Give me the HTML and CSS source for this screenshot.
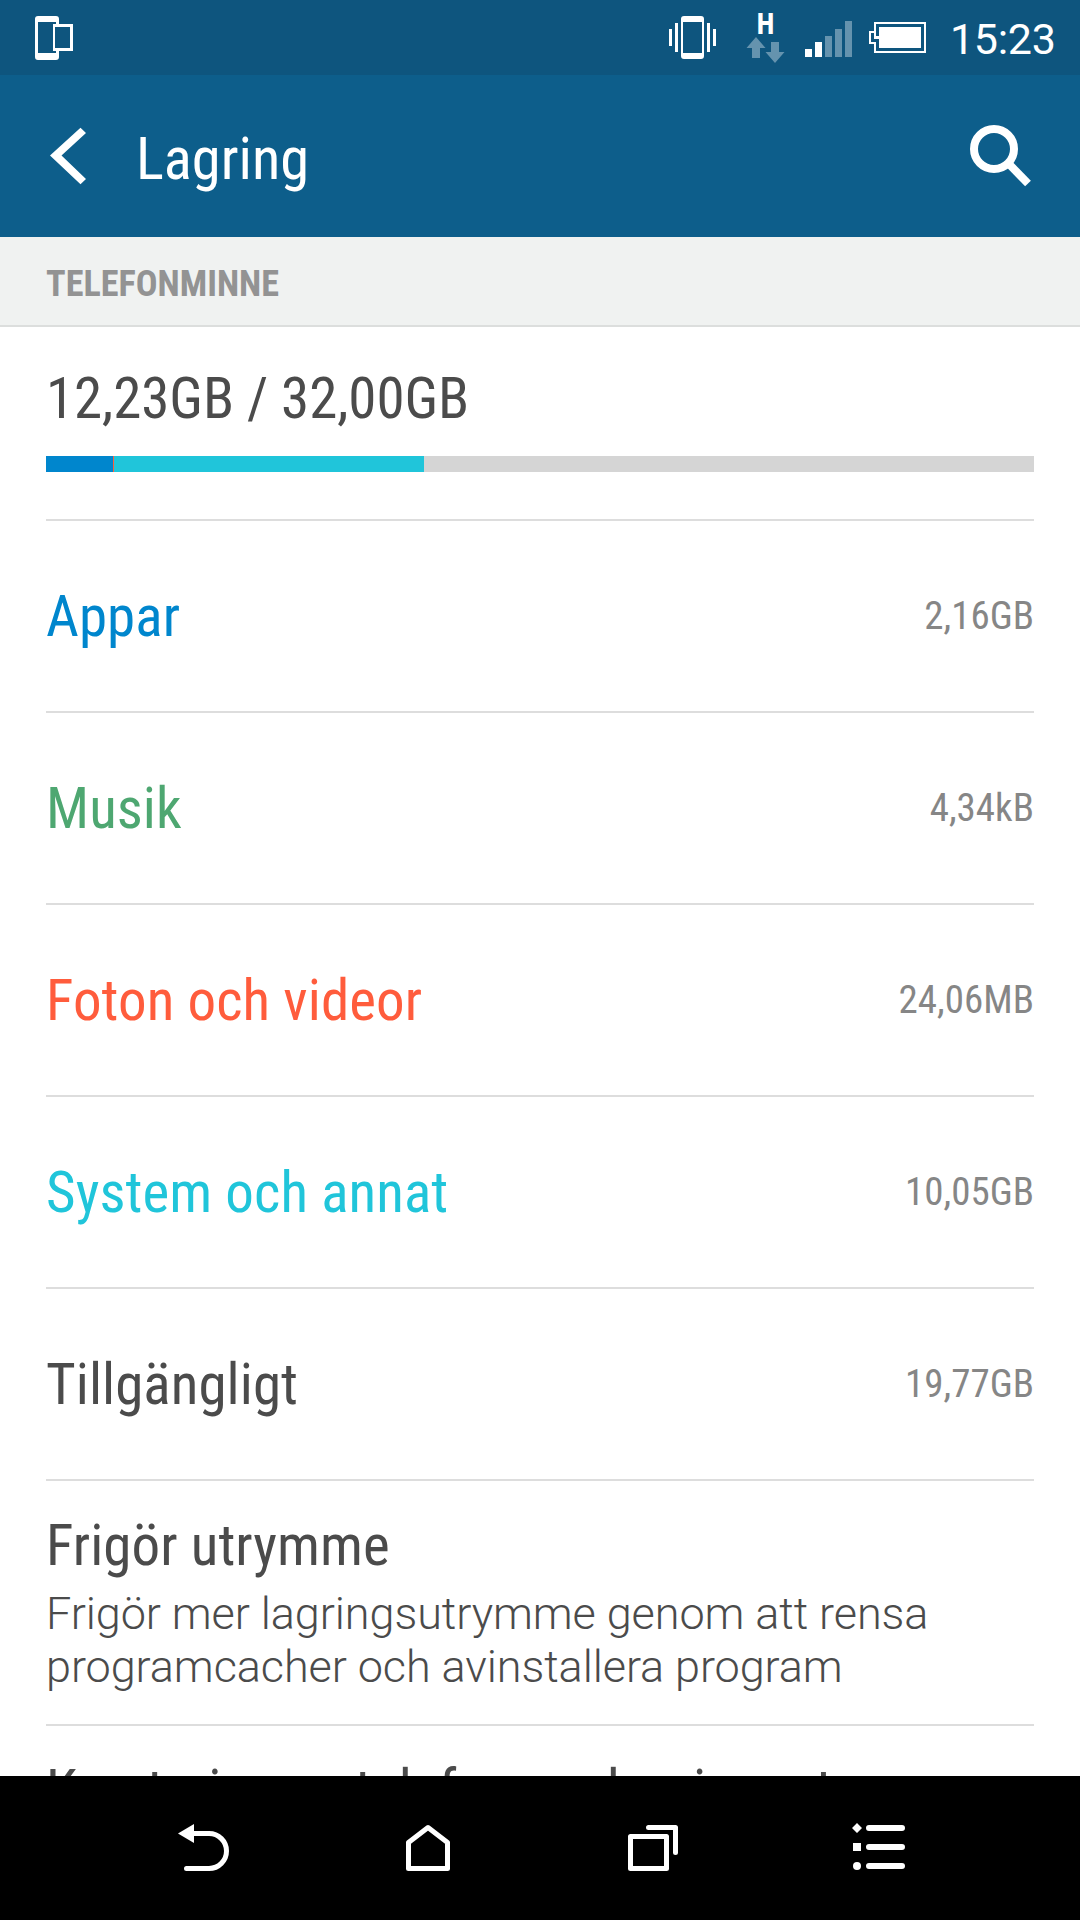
FILE: index.html
```html
<!DOCTYPE html>
<html lang="sv">
<head>
<meta charset="utf-8">
<title>Lagring</title>
<link rel="stylesheet" href="styles.css">
</head>
<body>
<div class="screen">
  <div class="status-bar">
    <svg class="notification" width="40" height="46" viewBox="34 15 40 46">
      <path fill="#fff" fill-rule="evenodd" d="M38 16h18a3 3 0 0 1 3 3v5h14v27H59v6a3 3 0 0 1-3 3H38a3 3 0 0 1-3-3V19a3 3 0 0 1 3-3zM38 22v31h18v-2h-3V24h3v-2zM55 27v21h15V27z"/>
    </svg>
    <svg class="indicators" width="260" height="75" viewBox="668 0 260 75">
      <path fill="#fff" fill-rule="evenodd" d="M669 29h3v17h-3zM675 23h3v29h-3zM707 23h3v29h-3zM713 29h3v17h-3zM684 16h17a3 3 0 0 1 3 3v37a3 3 0 0 1-3 3h-17a3 3 0 0 1-3-3V19a3 3 0 0 1 3-3zM683 22v31h19V22z"/>
      <text class="network" x="757" y="34" textLength="17" lengthAdjust="spacingAndGlyphs">H</text>
      <path fill="#6593ae" d="M756 37l9.500 11H760v10h-8V48h-5.500zM775 63l-9.500-11H771V42h8v10h5.500zM825 36h7v21h-7zM835 29h7v28h-7zM845 21h7v36h-7z"/>
      <path fill="#fff" d="M805 49h7v8h-7zM815 42h7v15h-7zM879 27h42v21h-42zM874 36h5v3h-5z"/>
      <path fill="none" stroke="#fff" stroke-width="2" d="M875 36V23h50v29h-50v-9h-5V32h5"/>
    </svg>
    <span class="clock">15:23</span>
  </div>
  <header class="app-bar">
    <svg width="38" height="58" viewBox="49 127 38 58"><path fill="#fff" d="M50 155.500L80.500 127.800l5.500 5.200-24.500 22.500L86 179l-5.500 5.200z"/></svg>
    <h1 class="title">Lagring</h1>
    <svg width="64" height="64" viewBox="969 124 64 64"><circle cx="994" cy="149" r="20" fill="none" stroke="#fff" stroke-width="8"/><path d="M1008 163l20 20.500" stroke="#fff" stroke-width="8"/></svg>
  </header>
  <h2 class="section">TELEFONMINNE</h2>
  <main class="content">
    <section class="summary">
      <div class="label">12,23GB / 32,00GB</div>
      <div class="meter"><i class="apps"></i><i class="photos"></i><i class="system"></i></div>
    </section>
    <div class="row c-apps"><span class="label">Appar</span><span class="value">2,16GB</span></div>
    <div class="row c-music"><span class="label">Musik</span><span class="value">4,34kB</span></div>
    <div class="row c-photos"><span class="label">Foton och videor</span><span class="value">24,06MB</span></div>
    <div class="row c-system"><span class="label">System och annat</span><span class="value">10,05GB</span></div>
    <div class="row"><span class="label">Tillgängligt</span><span class="value">19,77GB</span></div>
    <div class="action"><div class="label">Frigör utrymme</div><p class="hint">Frigör mer lagringsutrymme genom att rensa<br>programcacher och avinstallera program</p></div>
    <div class="action"><div class="label">Kryptering av telefonens lagringsutrymme</div></div>
  </main>
  <nav class="nav-bar">
    <svg width="54" height="50" viewBox="177 1823 54 50"><path fill="#fff" d="M178 1833.500l16-9.500v19z"/><path fill="none" stroke="#fff" stroke-width="5" stroke-linecap="round" d="M192 1833.500h17a17.500 17.500 0 0 1 0 35h-22.500"/></svg>
    <svg width="46" height="50" viewBox="405 1823 46 50"><path fill="none" stroke="#fff" stroke-width="5" stroke-linejoin="round" d="M408.500 1842.500L428 1827.500l19.500 15v26h-39z"/></svg>
    <svg width="52" height="50" viewBox="627 1823 52 50"><path fill="none" stroke="#fff" stroke-width="5" stroke-linejoin="round" stroke-linecap="round" d="M630.500 1836.500h36v32h-36zM648.500 1827.500h27v25"/></svg>
    <svg width="54" height="50" viewBox="852 1823 54 50"><path stroke="#fff" stroke-width="6" stroke-linecap="round" d="M869 1828h33M869 1847h33M869 1866h33"/><path fill="#fff" d="M857 1823l5 5-5 5-5-5zM853 1843h8v8h-8z"/><circle cx="857" cy="1866" r="4" fill="#fff"/></svg>
  </nav>
</div>
</body>
</html>
```
FILE: styles.css
```css
* { box-sizing: border-box; }
body { margin: 0; background: #fff; color: #4b4b4b; font-family: Roboto, sans-serif; }
svg { display: block; flex: none; }
.screen { width: 1080px; height: 1920px; display: flex; flex-direction: column; overflow: hidden; }

.status-bar { flex: none; height: 75px; background: #0e557e; display: flex; align-items: center; padding: 0 26px 0 34px; }
.indicators { margin-left: auto; }
.network { font: 900 29.500px Roboto, sans-serif; fill: #fff; }
.clock { width: 104px; margin-left: 22px; padding-top: 3px; color: #fff; font-size: 43px; line-height: 50px; letter-spacing: -.3px; white-space: nowrap; }

.app-bar { flex: none; height: 162px; background: #0d5e8b; display: flex; align-items: center; padding: 0 47px 0 49px; }
.title { flex: 1; margin: 0; padding: 6px 0 0 49px; color: #fff; font: 400 58.500px "Roboto Condensed", Roboto, sans-serif; }

.section { flex: none; height: 90px; margin: 0; padding: 5px 46px 0; background: #f0f2f1; border-bottom: 2px solid #dcdedd; color: #939393; font: 700 36.200px/83px "Roboto Condensed", Roboto, sans-serif; }

.content { flex: 1; min-height: 0; overflow: hidden; padding: 0 46px; }
.label { font-family: "Roboto Condensed", Roboto, sans-serif; font-size: 57px; line-height: 80px; white-space: nowrap; letter-spacing: .07px; }
.summary { height: 194px; padding-top: 32px; border-bottom: 2px solid #ddd; }
.summary .label { letter-spacing: -.08px; }
.meter { display: flex; height: 16px; margin-top: 17px; background: #d5d5d5; }
.meter .apps { width: 67px; background: #0086cd; }
.meter .photos { width: 1px; background: #ff5c3c; }
.meter .system { width: 310px; background: #20c5da; }

.row { height: 192px; display: flex; align-items: center; justify-content: space-between; border-bottom: 2px solid #ddd; }
.row .label { padding-top: 2px; }
.value { padding-bottom: 1px; color: #868686; font-family: "Roboto Condensed", Roboto, sans-serif; font-size: 39px; }
.c-apps .label { color: #0086cd; }
.c-music .label { color: #4ea771; }
.c-photos .label { color: #ff5c3c; }
.c-system .label { color: #20c5da; }

.action { padding: 31px 0; border-bottom: 2px solid #ddd; }
.action .label { line-height: 68px; }
.hint { margin: 7px 0 0; font-size: 45px; font-weight: 300; line-height: 53px; letter-spacing: -.08px; white-space: nowrap; }

.nav-bar { flex: none; height: 144px; background: #000; display: flex; align-items: center; justify-content: space-between; padding: 0 174px 0 177px; }
.nav-bar svg:nth-child(3) { margin: 0 -1px 0 1px; }
```
